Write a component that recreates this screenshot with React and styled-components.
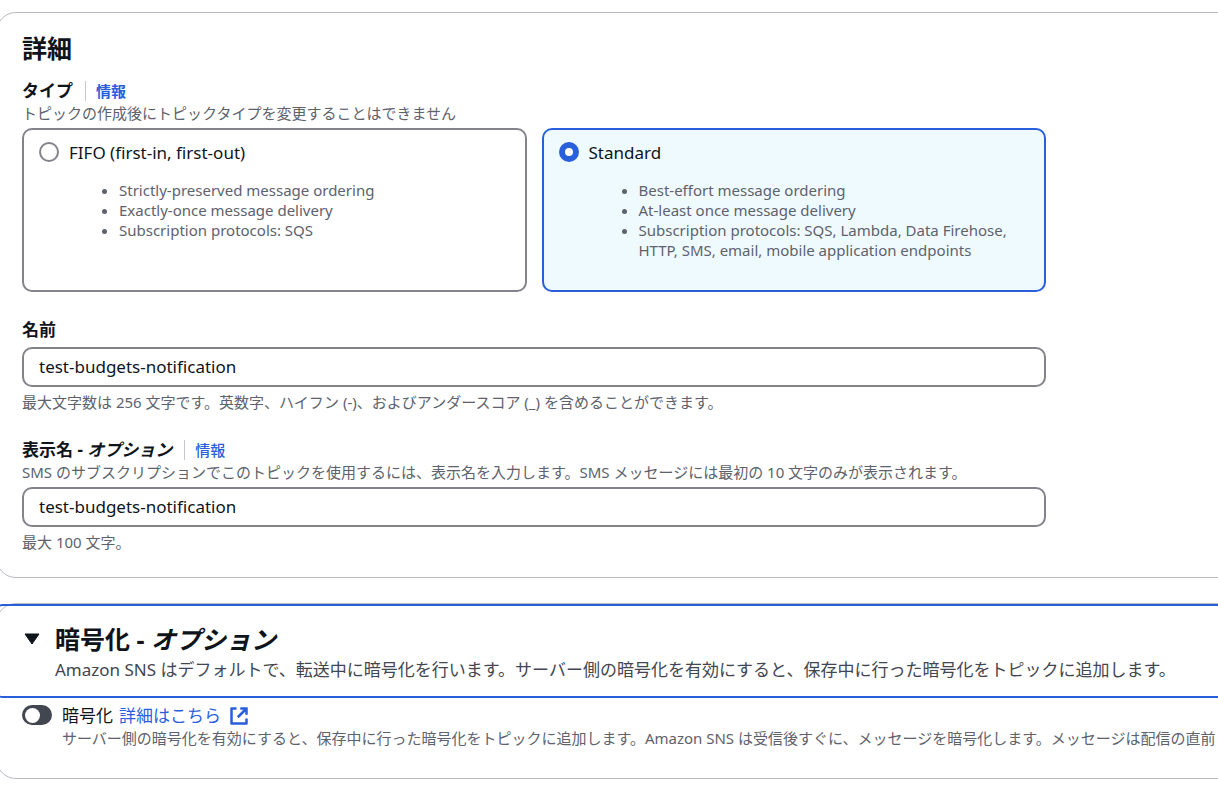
import React, { useState } from 'react';
import styled, { createGlobalStyle } from 'styled-components';

const GlobalStyle = createGlobalStyle`
  * {
    box-sizing: border-box;
  }

  body {
    margin: 0;
    background-color: #ffffff;
    color: #0f141a;
    font-family: 'Noto Sans', 'Noto Sans CJK JP', sans-serif;
    font-size: 17px;
    line-height: 25px;
    overflow-x: hidden;
  }
`

const Page = styled.main`
  display: flex;
  flex-direction: column;
  gap: 25px;
  margin: 12px -20px 0 -4px;
`

const Container = styled.section`
  border: 1px solid #b9b9c2;
  border-radius: 20px;
  background-color: #ffffff;
`

const ContainerBody = styled.div`
  display: flex;
  flex-direction: column;
  gap: 15px;
  padding: 20px 25px 25px;
`

const Title = styled.h2`
  margin: 0;
  font-size: 25px;
  line-height: 30px;
  font-weight: 700;
`

const Form = styled.form`
  display: flex;
  flex-direction: column;
  gap: 25px;
  max-width: 1024px;
`

const Field = styled.div`
  display: flex;
  flex-direction: column;
  gap: 5px;
`

const LabelRow = styled.div`
  display: flex;
  align-items: center;
  gap: 12px;
`

const Label = styled.label`
  font-weight: 700;
`

const InfoLink = styled.a`
  padding-left: 10px;
  border-left: 1px solid #c6c6cd;
  color: #295fdb;
  font-size: 15px;
  line-height: 20px;
  font-weight: ${props => props.$bold ? 700 : 500};
  text-decoration: none;
`

const Hint = styled.p`
  margin: 0;
  color: #5d626d;
  font-size: 15px;
  line-height: 20px;
`

const Tiles = styled.div`
  display: grid;
  grid-template-columns: 1fr 1fr;
  gap: 15px;
`

const Tile = styled.label`
  display: grid;
  grid-template-columns: 20px 1fr;
  column-gap: 10px;
  align-content: start;
  min-height: 164px;
  padding: 10px 15px;
  border: 2px solid ${props => props.$selected ? '#295fdb' : '#83838c'};
  border-radius: 10px;
  background-color: ${props => props.$selected ? '#effaff' : '#ffffff'};
  cursor: pointer;
`

const Radio = styled.input`
  appearance: none;
  width: 20px;
  height: 20px;
  margin: 2px 0 0;
  border: 2px solid #83838c;
  border-radius: 50%;
  background-color: #ffffff;

  &:checked {
    border: 6px solid #295fdb;
  }
`

const TileList = styled.ul`
  grid-column: 2;
  margin: 15px 0;
  padding-left: 50px;
  color: #5d626d;
  font-size: 15px;
  line-height: 20px;
`

const TextInput = styled.input`
  width: 100%;
  height: 40px;
  padding: 0 15px 2px;
  border: 2px solid #83838c;
  border-radius: 10px;
  color: #0f141a;
  font: inherit;
`

const ExpandHeader = styled.div`
  display: grid;
  grid-template-columns: 20px 1fr;
  column-gap: 13px;
  row-gap: 3px;
  padding: 18px 23px 14px;
  border: 2px solid #295fdb;
  border-radius: 5px;
`

const ExpandButton = styled.button`
  display: grid;
  place-items: center;
  width: 20px;
  height: 30px;
  padding: 0;
  border: 0;
  background: none;
  color: #0f141a;
  cursor: pointer;
`

const HeaderText = styled.p`
  grid-column: 2;
  margin: 0;
  color: #424650;
  white-space: nowrap;
`

const ToggleRow = styled.div`
  display: grid;
  grid-template-columns: 30px 1fr;
  column-gap: 10px;
  padding: 5px 25px 30px;
  overflow: hidden;
`

const Toggle = styled.input`
  appearance: none;
  display: flex;
  align-items: center;
  width: 30px;
  height: 20px;
  margin: 2px 0 0;
  padding: 0 3px;
  border-radius: 10px;
  background-color: #424650;
  cursor: pointer;

  &::before {
    content: '';
    width: 15px;
    height: 15px;
    border-radius: 50%;
    background-color: #ffffff;
  }

  &:checked {
    justify-content: flex-end;
    background-color: #295fdb;
  }
`

const ToggleLabel = styled.div`
  display: flex;
  align-items: center;
  gap: 6px;
`

const ExternalLink = styled.a`
  display: flex;
  align-items: center;
  gap: 8px;
  color: #295fdb;
  text-decoration: none;
`

const ToggleHint = styled(Hint)`
  grid-column: 2;
  white-space: nowrap;
`

const topicTypes = [
  {
    value: 'fifo',
    title: 'FIFO (first-in, first-out)',
    items: [
      'Strictly-preserved message ordering',
      'Exactly-once message delivery',
      'Subscription protocols: SQS'
    ]
  },
  {
    value: 'standard',
    title: 'Standard',
    items: [
      'Best-effort message ordering',
      'At-least once message delivery',
      'Subscription protocols: SQS, Lambda, Data Firehose, HTTP, SMS, email, mobile application endpoints'
    ]
  }
]

const CaretIcon = () => (
  <svg width="16" height="12" viewBox="0 0 16 12" aria-hidden="true">
    <path d="M1 1h14L8 11z" fill="currentColor" stroke="currentColor" strokeLinejoin="round" />
  </svg>
)

const ExternalIcon = () => (
  <svg width="20" height="20" viewBox="0 0 16 16" fill="none" stroke="currentColor" strokeWidth="2" aria-hidden="true">
    <path d="M14 10v4H2V2h4" strokeLinejoin="round" />
    <path d="M9 2h5v5M7 9l7-7" />
  </svg>
)

const Details = () => {
  const [type, setType] = useState('standard')
  const [name, setName] = useState('test-budgets-notification')
  const [displayName, setDisplayName] = useState('test-budgets-notification')

  return (
    <Container>
      <ContainerBody>
        <Title>詳細</Title>
        <Form>
          <Field role="radiogroup" aria-labelledby="type-label">
            <div>
              <LabelRow>
                <Label as="span" id="type-label">タイプ</Label>
                <InfoLink href="#type" $bold>情報</InfoLink>
              </LabelRow>
              <Hint>トピックの作成後にトピックタイプを変更することはできません</Hint>
            </div>
            <Tiles>
              {topicTypes.map(topic => (
                <Tile key={topic.value} $selected={type === topic.value}>
                  <Radio
                    type="radio"
                    name="type"
                    value={topic.value}
                    checked={type === topic.value}
                    onChange={() => setType(topic.value)}
                  />
                  <span>{topic.title}</span>
                  <TileList>
                    {topic.items.map(item => <li key={item}>{item}</li>)}
                  </TileList>
                </Tile>
              ))}
            </Tiles>
          </Field>
          <Field>
            <Label htmlFor="name">名前</Label>
            <TextInput id="name" value={name} onChange={e => setName(e.target.value)} />
            <Hint>最大文字数は 256 文字です。英数字、ハイフン (-)、およびアンダースコア (_) を含めることができます。</Hint>
          </Field>
          <Field>
            <div>
              <LabelRow>
                <Label htmlFor="display-name">表示名 - <em>オプション</em></Label>
                <InfoLink href="#display-name">情報</InfoLink>
              </LabelRow>
              <Hint>SMS のサブスクリプションでこのトピックを使用するには、表示名を入力します。SMS メッセージには最初の 10 文字のみが表示されます。</Hint>
            </div>
            <TextInput id="display-name" value={displayName} onChange={e => setDisplayName(e.target.value)} />
            <Hint>最大 100 文字。</Hint>
          </Field>
        </Form>
      </ContainerBody>
    </Container>
  )
}

const Encryption = () => {
  const [open, setOpen] = useState(true)
  const [encrypted, setEncrypted] = useState(false)

  return (
    <Container>
      <ExpandHeader>
        <ExpandButton
          type="button"
          aria-expanded={open}
          aria-labelledby="encryption-title"
          onClick={() => setOpen(!open)}
        >
          <CaretIcon />
        </ExpandButton>
        <Title id="encryption-title">暗号化 - <em>オプション</em></Title>
        <HeaderText>Amazon SNS はデフォルトで、転送中に暗号化を行います。サーバー側の暗号化を有効にすると、保存中に行った暗号化をトピックに追加します。</HeaderText>
      </ExpandHeader>
      {open && (
        <ToggleRow>
          <Toggle
            id="encryption"
            type="checkbox"
            role="switch"
            checked={encrypted}
            onChange={e => setEncrypted(e.target.checked)}
          />
          <ToggleLabel>
            <label htmlFor="encryption">暗号化</label>
            <ExternalLink href="#encryption">詳細はこちら <ExternalIcon /></ExternalLink>
          </ToggleLabel>
          <ToggleHint>サーバー側の暗号化を有効にすると、保存中に行った暗号化をトピックに追加します。Amazon SNS は受信後すぐに、メッセージを暗号化します。メッセージは配信の直前</ToggleHint>
        </ToggleRow>
      )}
    </Container>
  )
}

export default function App() {
  return (
    <>
      <GlobalStyle />
      <Page>
        <Details />
        <Encryption />
      </Page>
    </>
  )
}
